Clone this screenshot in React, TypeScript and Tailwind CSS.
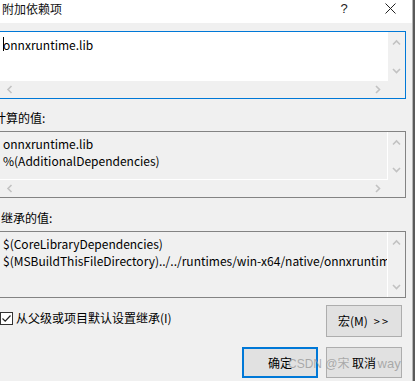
import React from "react";

const font = "font-['Noto_Sans_CJK_SC','Noto_Sans',sans-serif]";

function Chevron({ dir }: { dir: "up" | "down" | "left" | "right" }) {
  const d = {
    up: "M1 5.5 L4.5 2 L8 5.5",
    down: "M1 2 L4.5 5.5 L8 2",
    left: "M5.5 1 L2 4.5 L5.5 8",
    right: "M2 1 L5.5 4.5 L2 8",
  }[dir];
  const size = dir === "up" || dir === "down" ? "w-[9px] h-[7px]" : "w-[7px] h-[9px]";
  const vb = dir === "up" || dir === "down" ? "0 0 9 7" : "0 0 7 9";
  return (
    <svg viewBox={vb} className={size} fill="none">
      <path d={d} stroke="#c2c2c2" strokeWidth="1.6" />
    </svg>
  );
}

function VScroll() {
  return (
    <div className="flex flex-col items-center justify-between py-[7px]">
      <Chevron dir="up" />
      <Chevron dir="down" />
    </div>
  );
}

function HScroll() {
  return (
    <div className="flex items-center justify-between pl-[9px] pr-[7px]">
      <Chevron dir="left" />
      <Chevron dir="right" />
    </div>
  );
}

function Label({ text, className }: { text: string; className: string }) {
  return <div className={`h-[16px] leading-[16px] text-[12px] text-black ${className}`}>{text}</div>;
}

export default function App() {
  return (
    <div className={`w-[415px] h-[381px] bg-[#f0f0f0] overflow-hidden relative ${font} text-[12px] text-black`}>
      {/* title bar */}
      <div className="h-[23px] bg-white flex items-start pt-[1px]">
        <div className="pl-[2px] leading-[16px] text-[12px] text-[#111]">附加依赖项</div>
        <div className="ml-auto w-[14px] mr-[34px] text-center leading-[16px] text-[13px] font-['Liberation_Sans',sans-serif] text-[#222]">
          ?
        </div>
        <svg viewBox="0 0 11 11" className="w-[11px] h-[11px] mt-[2px] mr-[19px]" fill="none">
          <path d="M0.5 0.5 L10.5 10.5 M10.5 0.5 L0.5 10.5" stroke="#222" strokeWidth="1" />
        </svg>
      </div>

      <div className="flex">
        <div className="w-[412px] flex flex-col">
          {/* additional dependencies editor */}
          <div className="ml-[-4px] mt-[8px] w-[410px] h-[68px] border border-[#0078d7] grid grid-cols-[1fr_17px] grid-rows-[1fr_17px]">
            <div className="bg-white pl-[6px] pt-[4px] relative">
              <span className="absolute left-[6px] top-[5px] w-px h-[14px] bg-black" />
              <div className="leading-[17px]">onnxruntime.lib</div>
            </div>
            <VScroll />
            <HScroll />
            <div />
          </div>

          <Label text="计算的值:" className="ml-[-6px] mt-[11px]" />

          <div className="ml-[-4px] mt-[5px] w-[410px] h-[67px] border border-[#838383] grid grid-cols-[1fr_17px] grid-rows-[1fr_17px]">
            <div className="border-r border-b border-white pl-[6px] pt-[3px] leading-[17px]">
              <div>onnxruntime.lib</div>
              <div>%(AdditionalDependencies)</div>
            </div>
            <VScroll />
            <HScroll />
            <div />
          </div>

          <Label text="继承的值:" className="ml-[1px] mt-[12px]" />

          <div className="ml-[-4px] mt-[5px] w-[410px] h-[67px] border border-[#838383] grid grid-cols-[1fr_17px]">
            <div className="border-r border-white pl-[6px] pt-[3px] leading-[17px] overflow-hidden whitespace-nowrap">
              <div>$(CoreLibraryDependencies)</div>
              <div>$(MSBuildThisFileDirectory)../../runtimes/win-x64/native/onnxruntime.lib</div>
            </div>
            <VScroll />
          </div>

          {/* inherit + macros */}
          <div className="mt-[7px] flex items-start pr-[10px]">
            <label className="mt-[5px] flex items-center gap-[3px]">
              <span className="w-[13px] h-[13px] border border-[#333] bg-white flex items-center justify-center">
                <svg viewBox="0 0 11 11" className="w-[11px] h-[11px]" fill="none">
                  <path d="M1.5 5.5 L4.2 8.2 L9.5 2.5" stroke="#222" strokeWidth="1.2" />
                </svg>
              </span>
              <span className="leading-[16px]">从父级或项目默认设置继承(I)</span>
            </label>
            <button className="ml-auto w-[76px] h-[32px] bg-[#e1e1e1] border border-[#adadad] flex items-center justify-center leading-[16px]">
              宏(M)<span className="ml-[6px] tracking-[2px] text-[11px]">&gt;&gt;</span>
            </button>
          </div>

          <div className="mt-[10px] flex justify-end gap-[8px] pr-[10px]">
            <button className="w-[76px] h-[31px] bg-[#e1e1e1] border-2 border-[#0078d7] flex items-center justify-center leading-[16px]">
              确定
            </button>
            <button className="w-[76px] h-[31px] bg-[#e1e1e1] border border-[#adadad] flex items-center justify-center leading-[16px]">
              取消
            </button>
          </div>
        </div>
        <div className="w-px h-[381px] bg-[#b4b4b4] mt-[-23px]" />
        <div className="w-[2px] h-[381px] bg-[#5a5a5a] mt-[-23px]" />
      </div>

      {/* watermark */}
      <div className="absolute left-[288px] top-[356px] flex items-center text-[12px] leading-[16px] font-['Liberation_Sans','Noto_Sans_CJK_SC',sans-serif] text-[rgba(150,150,150,0.75)] pointer-events-none">
        <span>CSDN @宋</span>
        <span className="ml-[28px] text-[13px]">way</span>
      </div>
    </div>
  );
}
